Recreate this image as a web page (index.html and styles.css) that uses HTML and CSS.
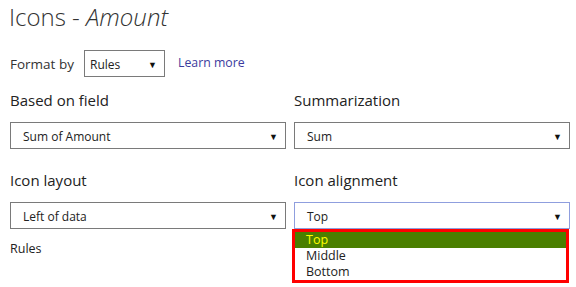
FILE: index.html
```html
<!DOCTYPE html>
<html>
<head>
<meta charset="utf-8">
<link rel="stylesheet" href="styles.css">
</head>
<body>
<div class="panel">
  <h1 class="title">Icons - <em>Amount</em></h1>
  <div class="format-row">
    <span class="format-label">Format by</span>
    <div class="select select-small"><span>Rules</span><span class="arrow">▼</span></div>
    <a class="link" href="#">Learn more</a>
  </div>
  <div class="grid">
    <div class="field">
      <div class="label">Based on field</div>
      <div class="select"><span>Sum of Amount</span><span class="arrow">▼</span></div>
    </div>
    <div class="field">
      <div class="label">Summarization</div>
      <div class="select"><span>Sum</span><span class="arrow">▼</span></div>
    </div>
    <div class="field">
      <div class="label">Icon layout</div>
      <div class="select"><span>Left of data</span><span class="arrow">▼</span></div>
      <div class="rules">Rules</div>
    </div>
    <div class="field">
      <div class="label">Icon alignment</div>
      <div class="dropdown-wrap">
        <div class="select select-focus"><span>Top</span><span class="arrow">▼</span></div>
        <ul class="menu">
          <li class="option selected">Top</li>
          <li class="option">Middle</li>
          <li class="option">Bottom</li>
        </ul>
      </div>
    </div>
  </div>
  <div class="divider"></div>
</div>
</body>
</html>
```
FILE: styles.css
```css
html, body {
  margin: 0;
  padding: 0;
  background: #ffffff;
}
body {
  font-family: "Open Sans", "Noto Sans", sans-serif;
  color: #222;
  width: 576px;
  height: 287px;
  overflow: hidden;
}
.panel {
  padding: 0 6px 0 10px;
}
.title {
  margin: 0 0 0 -1px;
  padding-top: 0;
  font-weight: 300;
  font-size: 24px;
  line-height: 33px;
  color: #333;
  letter-spacing: 0;
}
.title em {
  font-style: italic;
}
.format-row {
  display: flex;
  align-items: center;
  margin-top: 17px;
  height: 27px;
}
.format-label {
  font-size: 13.5px;
  color: #333;
  width: 74px;
}
.select {
  display: flex;
  align-items: center;
  justify-content: space-between;
  box-sizing: border-box;
  height: 27px;
  border: 1px solid #7a7a7a;
  padding: 1px 7px 0 12px;
  font-size: 12px;
  color: #222;
  background: #fff;
}
.select-small {
  width: 81px;
  padding-left: 5px;
}
.arrow {
  font-size: 9px;
  color: #111;
}
.link {
  margin-left: 13px;
  margin-bottom: 3px;
  font-size: 12.3px;
  color: #3b3b9e;
  text-decoration: none;
}
.grid {
  display: grid;
  grid-template-columns: 276px 276px;
  column-gap: 8px;
  row-gap: 20px;
  margin-top: 12px;
}
.label {
  font-size: 15px;
  line-height: 22px;
  color: #222;
  margin-bottom: 11px;
}
.rules {
  font-size: 12.5px;
  margin-top: 11px;
  color: #222;
}
.dropdown-wrap {
  position: relative;
}
.select-focus {
  border-color: #8f9ede;
}
.menu {
  position: absolute;
  left: -2px;
  top: 27px;
  width: 277px;
  box-sizing: border-box;
  margin: 0;
  padding: 0;
  list-style: none;
  border: 3px solid #ff0000;
  background: #fff;
}
.option {
  height: 16px;
  line-height: 16px;
  padding-left: 11px;
  font-size: 12.5px;
  color: #222;
}
.option.selected {
  background: #4a7f00;
  color: #ffff00;
}
.divider {
  margin-top: 31px;
  height: 1px;
  background: #e4e4e4;
}
```
